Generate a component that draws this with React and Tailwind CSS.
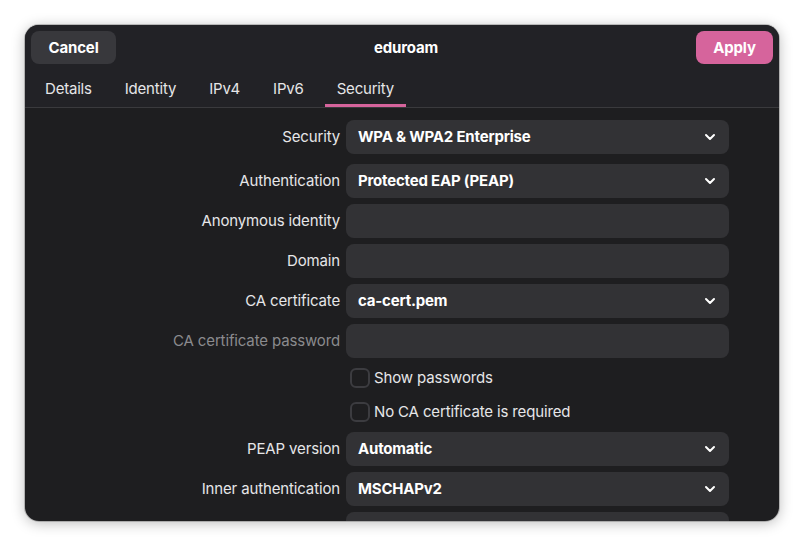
import React, { useState } from "react";

const rows = [
  { label: "Security", value: "WPA & WPA2 Enterprise", combo: true },
  { label: "Authentication", value: "Protected EAP (PEAP)", combo: true, gap: "mt-[10px]" },
  { label: "Anonymous identity", value: "" },
  { label: "Domain", value: "" },
  { label: "CA certificate", value: "ca-cert.pem", combo: true },
  { label: "CA certificate password", value: "", dim: true },
];

const lowerRows = [
  { label: "PEAP version", value: "Automatic", combo: true },
  { label: "Inner authentication", value: "MSCHAPv2", combo: true },
  { label: "", value: "" },
];

const tabs = ["Details", "Identity", "IPv4", "IPv6", "Security"];

const Chevron = () => (
  <svg width="12" height="12" viewBox="0 0 12 12" fill="none">
    <path d="M2 4l4 4 4-4" stroke="#ffffff" strokeWidth="2" strokeLinecap="round" strokeLinejoin="round" />
  </svg>
);

const Row = ({ row }) => (
  <div className={`flex items-center gap-[6px] ${row.gap || "mt-[6px]"}`}>
    <div className={`w-[315px] shrink-0 text-right text-[15px] tracking-[-0.14px] ${row.dim ? "text-[#8b8b8e]" : "text-[#e6e6e8]"}`}>
      {row.label}
    </div>
    <div className="w-[383px] h-[34px] rounded-[8px] bg-[#323235] flex items-center justify-between pl-[12px] pr-[13px]">
      <span className="text-[15px] font-bold tracking-[-0.2px] text-white">{row.value}</span>
      {row.combo && <Chevron />}
    </div>
  </div>
);

const Check = ({ label }) => (
  <div className="flex items-center h-[28px] mt-[6px] pl-[325px]">
    <div className="w-[20px] h-[20px] rounded-[6px] border-2 border-[#3c3c40]"></div>
    <span className="ml-[4px] text-[15px] tracking-[-0.14px] text-[#e6e6e8]">{label}</span>
  </div>
);

export default function App() {
  const [tab, setTab] = useState("Security");

  return (
    <div className="w-[804px] h-[547px] bg-white p-[25px]" style={{ fontFamily: "Inter, 'Noto Sans', sans-serif" }}>
      <div className="w-[754px] h-[496px] rounded-[14px] overflow-hidden bg-[#1e1e20] shadow-[0_2px_14px_rgba(0,0,0,0.28)] ring-1 ring-black/20">
        {/* Header */}
        <div className="bg-[#222226] border-b border-[#3a3a3d]">
          <div className="flex items-center justify-between px-[6px] pt-[6px]">
            <button className="w-[85px] h-[33px] pt-[1px] rounded-[8px] bg-[#38383c] text-white text-[15px] font-bold tracking-[-0.14px]">
              Cancel
            </button>
            <div className="text-white text-[15px] font-bold tracking-[-0.14px] pt-[1px]">eduroam</div>
            <button className="w-[77px] h-[33px] pt-[1px] rounded-[8px] bg-[#d6649c] text-white text-[15px] font-bold tracking-[-0.14px]">
              Apply
            </button>
          </div>
          <div className="flex gap-[9px] pl-[8px] mt-[6px]">
            {tabs.map(t => (
              <button
                key={t}
                onClick={() => setTab(t)}
                className={`h-[37px] px-[12px] pt-[4px] text-[15px] tracking-[-0.2px] text-[#e6e6e8] border-b-[3px] ${t === tab ? "border-[#d6649c]" : "border-transparent"}`}
              >
                {t}
              </button>
            ))}
          </div>
        </div>

        {/* Form */}
        <div className="pt-[6px]">
          {rows.map(r => <Row key={r.label} row={r} />)}
          <Check label="Show passwords" />
          <Check label="No CA certificate is required" />
          {lowerRows.map((r, i) => <Row key={i} row={r} />)}
        </div>
      </div>
    </div>
  );
}
